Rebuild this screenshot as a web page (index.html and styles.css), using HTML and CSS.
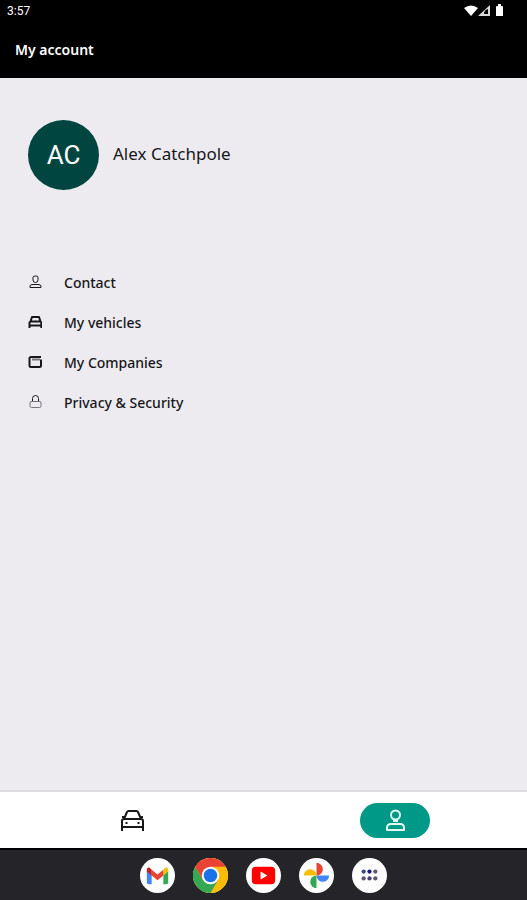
FILE: index.html
```html
<!DOCTYPE html>
<html lang="en">
<head>
    <meta charset="UTF-8">
    <meta name="viewport" content="width=device-width, initial-scale=1.0">
    <title>My account</title>
    <link rel="stylesheet" href="styles.css">
</head>
<body>
    <div class="status-bar">
        <span>3:57</span>
        <svg class="status-icons" width="40" height="14" viewBox="0 0 40 14" fill="#fff" aria-hidden="true">
            <path d="M0 4Q7-1 14 4L7 12Z"/>
            <path fill-rule="evenodd" d="M14 12L26 1V12ZM20 10H24V5Q20 6 20 10Z" opacity="0.85"/>
            <path d="M32 3Q32 2 33 2H34V0H37V2H38Q39 2 39 3V12H32Z"/>
        </svg>
    </div>

    <header class="app-header">
        <h1>My account</h1>
    </header>

    <main class="content">
        <section class="profile">
            <div class="avatar">AC</div>
            <h2>Alex Catchpole</h2>
        </section>

        <ul class="menu">
            <li>
                <a href="#contact">
                    <svg width="14" height="16" viewBox="0 0 14 16" aria-hidden="true">
                        <path d="M5 3Q5 2 7.5 2T10 3V6Q10 8.500 7.500 8.500T5 6ZM2 13.500V12Q2 10.500 5 10.500H10Q13 10.500 13 12V13.500Z"/>
                    </svg>
                    Contact
                </a>
            </li>
            <li>
                <a href="#vehicles">
                    <svg class="bold" width="14" height="16" viewBox="0 0 14 16" aria-hidden="true">
                        <path d="M2.500 7.500L4 3H11L12.500 7.500M1.500 14V8.500L2.500 7.500H12.500L13.300 8.500V14M1.500 11.500H13.500"/>
                    </svg>
                    My vehicles
                </a>
            </li>
            <li>
                <a href="#companies">
                    <svg class="bold" width="14" height="16" viewBox="0 0 14 16" aria-hidden="true">
                        <path d="M13 3H3Q1.500 3 1.500 4.500V11.500Q1.500 13 3 13H11.500Q13 13 13 11.500V5.500"/>
                        <path class="faint" d="M4 5.500H12"/>
                    </svg>
                    My Companies
                </a>
            </li>
            <li>
                <a href="#privacy">
                    <svg width="14" height="16" viewBox="0 0 14 16" aria-hidden="true">
                        <path d="M4.500 7.500V4.500Q4.500 1.500 7.500 1.500T10.500 4.500V7.500"/>
                        <path class="faint" d="M3 7.500H12Q13 7.500 13 9V12Q13 13.500 11.500 13.500H3.500Q2 13.500 2 12V9Q2 7.500 3 7.500Z"/>
                    </svg>
                    Privacy &amp; Security
                </a>
            </li>
        </ul>
    </main>

    <nav class="tabs">
        <a class="tab" href="#vehicles" aria-label="Vehicles">
            <svg width="24" height="24" viewBox="0 0 24 24" aria-hidden="true">
                <path d="M4 11L7 4Q7.500 3 8.500 3H16.500Q17.500 3 18 4L21 11M2 23V13Q2 11 4 11H21Q23 11 23 13V23M2 19H23M2 9H4M21 9H23"/>
                <path d="M5.500 15H7.500M17.500 15H19.500"/>
            </svg>
        </a>
        <a class="tab active" href="#account" aria-label="My account">
            <svg width="24" height="24" viewBox="0 0 24 24" aria-hidden="true">
                <circle cx="12.500" cy="7" r="4.500"/>
                <path d="M10 13H15M4 22V20Q4 16 8 16H17Q21 16 21 20V22Z"/>
            </svg>
        </a>
    </nav>

    <div class="dock">
        <button type="button" aria-label="Gmail">
            <svg viewBox="0 0 36 36" aria-hidden="true">
                <path fill="#4285f4" d="M7 13L12 17V27H9Q7 27 7 25Z"/>
                <path fill="#34a853" d="M24 17L29 13V25Q29 27 27 27H24Z"/>
                <path fill="#ea4335" d="M12 12L18 17L24 12V18L18 23L12 18Z"/>
                <path fill="#c5221f" d="M7 13Q7 9 10 10L12 12V18L7 14Z"/>
                <path fill="#fbbc04" d="M24 12L26 10Q29 9 29 13V14L24 18Z"/>
            </svg>
        </button>
        <button type="button" aria-label="Chrome">
            <svg viewBox="0 0 36 36" aria-hidden="true">
                <circle cx="18" cy="18" r="18" fill="#fbbc05"/>
                <path fill="#34a853" d="M2.400 9A18 18 0 0 0 18 36L25.800 22.500L18 18L10.200 22.500Z"/>
                <path fill="#ea4335" d="M2.400 9A18 18 0 0 1 33.600 9H18V18L10.200 22.500Z"/>
                <circle cx="18" cy="18" r="9" fill="#fff"/>
                <circle cx="18" cy="18" r="7" fill="#1a73e8"/>
            </svg>
        </button>
        <button type="button" aria-label="YouTube">
            <svg viewBox="0 0 36 36" aria-hidden="true">
                <rect x="6" y="9" width="24" height="18" rx="4" fill="#f00"/>
                <path fill="#fff" d="M15 14L22 18L15 22Z"/>
            </svg>
        </button>
        <button type="button" aria-label="Photos">
            <svg viewBox="0 0 36 36" aria-hidden="true">
                <path fill="#ea4335" d="M18 5A6.500 6.500 0 0 1 18 18Z"/>
                <path fill="#4285f4" d="M31 18A6.500 6.500 0 0 1 18 18Z"/>
                <path fill="#34a853" d="M18 31A6.500 6.500 0 0 1 18 18Z"/>
                <path fill="#fbbc04" d="M5 18A6.500 6.500 0 0 1 18 18Z"/>
            </svg>
        </button>
        <button type="button" aria-label="All apps">
            <svg viewBox="0 0 36 36" fill="#5f5872" aria-hidden="true">
                <circle cx="12" cy="14" r="2.200" fill="#3c4a8c"/>
                <circle cx="18" cy="14" r="2.200" fill="#1a1a80"/>
                <circle cx="24" cy="14" r="2.200"/>
                <circle cx="12" cy="21" r="2.200"/>
                <circle cx="18" cy="21" r="2.200" fill="#46417c"/>
                <circle cx="24" cy="21" r="2.200"/>
            </svg>
        </button>
    </div>
</body>
</html>
```
FILE: styles.css
```css
* {
    box-sizing: border-box;
}

body {
    margin: 0;
    min-height: 100vh;
    display: flex;
    flex-direction: column;
    font-family: "Noto Sans", sans-serif;
    color: #17171a;
    background-color: #edebf0;
}

h1, h2, ul {
    margin: 0;
    padding: 0;
}

.status-bar {
    display: flex;
    align-items: center;
    justify-content: space-between;
    height: 22px;
    padding: 0 23px 0 7px;
    background-color: #000;
    color: #fff;
    font-family: Roboto, sans-serif;
    font-size: 12px;
}

.app-header {
    display: flex;
    align-items: center;
    height: 56px;
    padding: 0 15px 2px;
    background-color: #000;
    color: #fff;
}

.app-header h1 {
    font-size: 14px;
    font-weight: 600;
}

.content {
    flex: 1;
    padding: 42px 28px;
}

.profile {
    display: flex;
    align-items: center;
    gap: 14px;
}

.avatar {
    display: flex;
    align-items: center;
    justify-content: center;
    width: 71px;
    height: 70px;
    border-radius: 50%;
    background-color: #004540;
    color: #fff;
    font-family: Roboto, sans-serif;
    font-size: 26px;
}

.profile h2 {
    padding-bottom: 4px;
    font-size: 17px;
    font-weight: 400;
}

.menu {
    margin-top: 72px;
    list-style: none;
}

.menu a {
    display: flex;
    align-items: center;
    gap: 22px;
    height: 40px;
    color: inherit;
    font-size: 14px;
    font-weight: 500;
    text-decoration: none;
}

.menu svg,
.tab svg {
    fill: none;
    stroke: currentColor;
    stroke-linejoin: round;
}

.menu svg.bold,
.tab svg {
    stroke-width: 2;
}

.menu .faint {
    stroke: #77757c;
}

.tabs {
    display: grid;
    grid-template-columns: 1fr 1fr;
    place-items: center;
    height: 58px;
    border-top: 2px solid #dcdbe0;
    background-color: #fff;
}

.tab {
    display: flex;
    align-items: center;
    justify-content: center;
    width: 70px;
    height: 35px;
    border-radius: 18px;
    color: #17171a;
}

.tab.active {
    background-color: #009886;
    color: #e0faf6;
}

.dock {
    display: flex;
    align-items: center;
    justify-content: center;
    gap: 18px;
    height: 52px;
    border-top: 2px solid #000;
    background-color: #242429;
}

.dock button {
    width: 35px;
    height: 35px;
    padding: 0;
    border: none;
    border-radius: 50%;
    background-color: #fff;
    cursor: pointer;
}

.dock svg {
    display: block;
    width: 100%;
    height: 100%;
}
```
